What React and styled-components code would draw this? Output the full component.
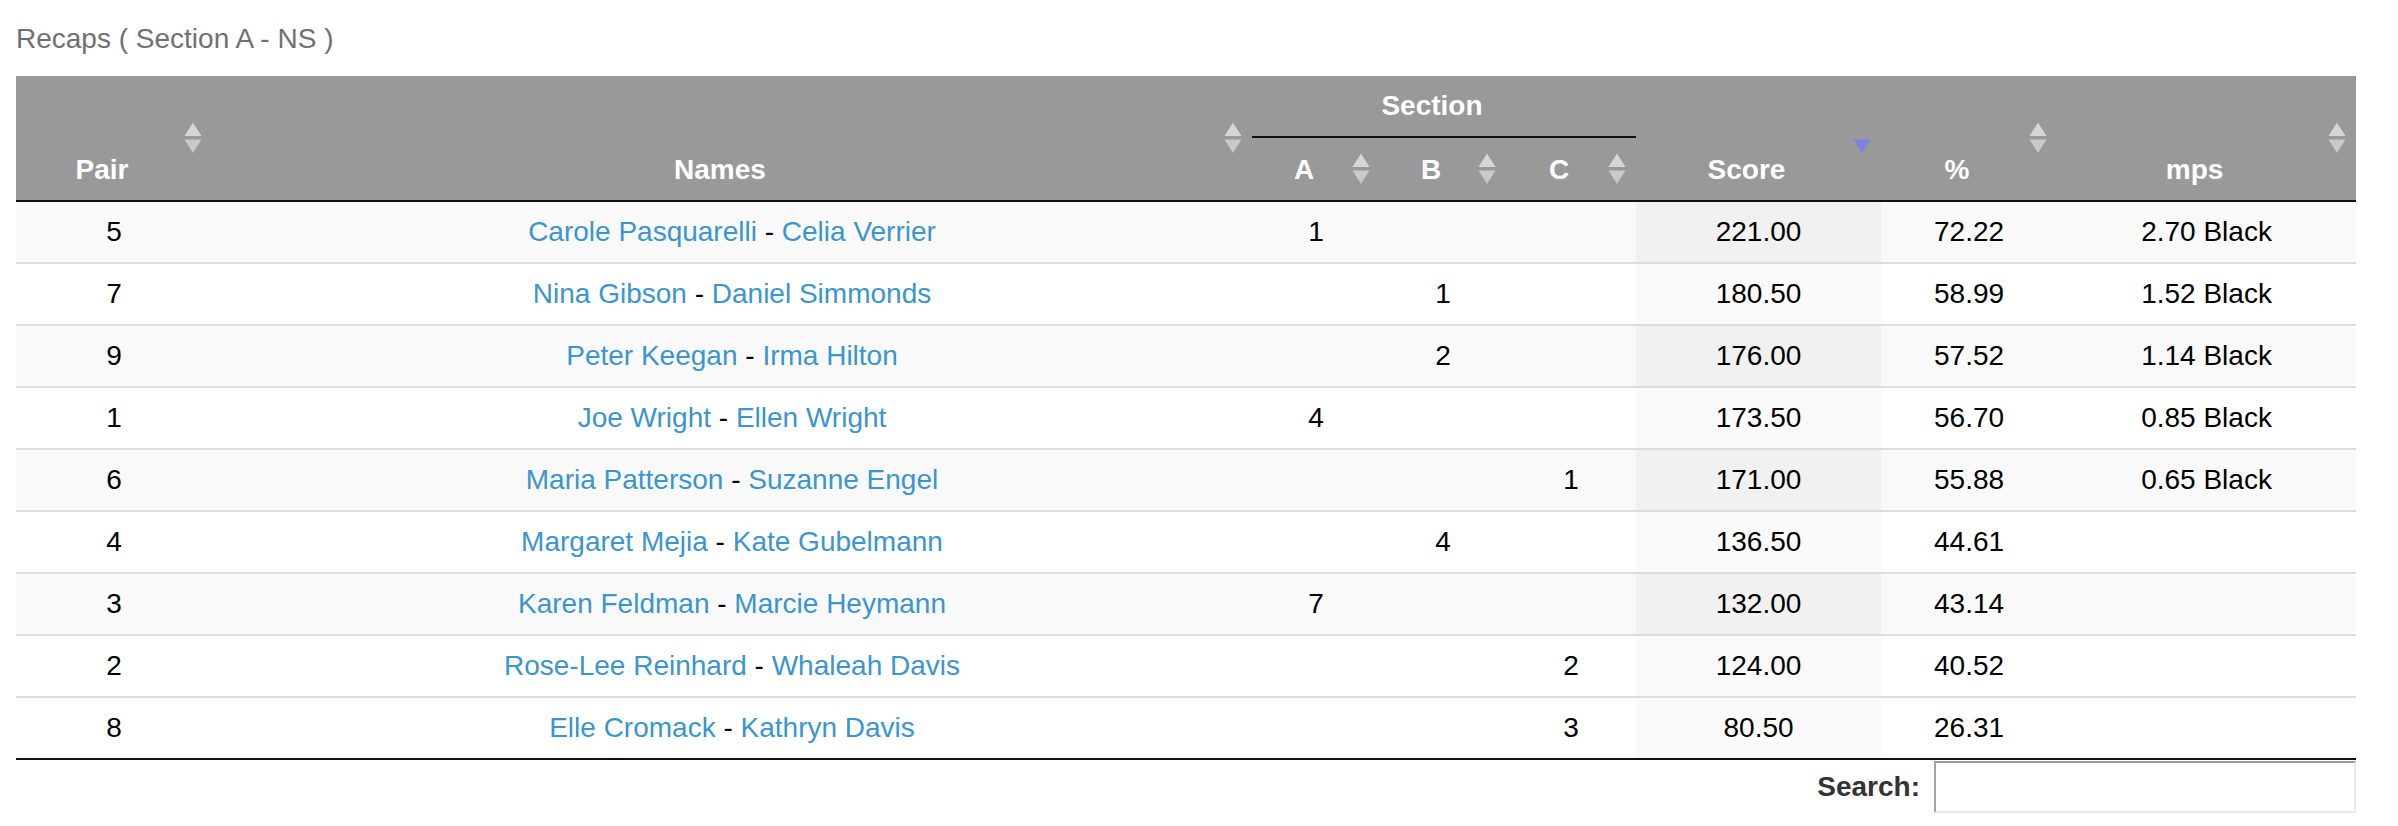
import React from "react";
import styled, { createGlobalStyle } from "styled-components";

const GlobalStyle = createGlobalStyle`
  body {
    margin: 0;
    background: #fff;
    font-family: "Liberation Sans", Arial, Helvetica, sans-serif;
  }
`;

const rows = [
  { pair: 5, a: "Carole Pasquarelli", b: "Celia Verrier", sec: ["1", "", ""], score: "221.00", pct: "72.22", mps: "2.70 Black" },
  { pair: 7, a: "Nina Gibson", b: "Daniel Simmonds", sec: ["", "1", ""], score: "180.50", pct: "58.99", mps: "1.52 Black" },
  { pair: 9, a: "Peter Keegan", b: "Irma Hilton", sec: ["", "2", ""], score: "176.00", pct: "57.52", mps: "1.14 Black" },
  { pair: 1, a: "Joe Wright", b: "Ellen Wright", sec: ["4", "", ""], score: "173.50", pct: "56.70", mps: "0.85 Black" },
  { pair: 6, a: "Maria Patterson", b: "Suzanne Engel", sec: ["", "", "1"], score: "171.00", pct: "55.88", mps: "0.65 Black" },
  { pair: 4, a: "Margaret Mejia", b: "Kate Gubelmann", sec: ["", "4", ""], score: "136.50", pct: "44.61", mps: "" },
  { pair: 3, a: "Karen Feldman", b: "Marcie Heymann", sec: ["7", "", ""], score: "132.00", pct: "43.14", mps: "" },
  { pair: 2, a: "Rose-Lee Reinhard", b: "Whaleah Davis", sec: ["", "", "2"], score: "124.00", pct: "40.52", mps: "" },
  { pair: 8, a: "Elle Cromack", b: "Kathryn Davis", sec: ["", "", "3"], score: "80.50", pct: "26.31", mps: "" },
];

// stripes as they show in the screenshot (last row is not striped)
const striped = [true, false, true, false, true, false, true, false, false];

const colWidths = [196, 1040, 128, 126, 130, 245, 176, 299];

const Page = styled.div`
  width: 2340px;
  padding-left: 16px;
`;

const Title = styled.div`
  font-size: 28px;
  line-height: 32px;
  color: #707070;
  margin: 23px 0 21px 0;
`;

const Table = styled.table`
  width: 2340px;
  table-layout: fixed;
  border-collapse: separate;
  border-spacing: 0;
  border-bottom: 2px solid #111;
`;

const HeadCell = styled.th`
  position: relative;
  background: #999;
  color: #fff;
  font-size: 28px;
  line-height: 32px;
  font-weight: bold;
  text-align: center;
  vertical-align: bottom;
  padding: ${(p) => (p.$second ? "16px" : "14px")} 60px 14px 36px;
  border-bottom: 2px solid #111;
  box-shadow: ${(p) => (p.$group ? "0 2px 0 #c4c4c4" : "none")};
  white-space: nowrap;
  overflow: hidden;
`;

const Cell = styled.td`
  font-size: 28px;
  line-height: 32px;
  color: #000;
  text-align: center;
  padding: 14px 20px;
  border-top: ${(p) => (p.$first ? "none" : "2px solid #ddd")};
  background: ${(p) =>
    p.$sorted ? (p.$odd ? "#f1f1f1" : "#fafafa") : p.$odd ? "#f9f9f9" : "#fff"};
  white-space: nowrap;
`;

const NameLink = styled.a`
  color: #3a95d0;
  text-decoration: none;
`;

const IconBox = styled.svg`
  position: absolute;
  right: 10px;
  top: 50%;
  transform: translateY(-50%);
  width: 18px;
  height: 31px;
`;

const SortIcon = ({ desc }) => (
  <IconBox viewBox="0 0 18 31">
    {!desc && <polygon points="9,0 17.5,13.5 0.5,13.5" fill="#d6d6d6" />}
    <polygon
      points="0.5,17 17.5,17 9,30.5"
      fill={desc ? "#7c82e2" : "#c9c9c9"}
    />
  </IconBox>
);

const Filter = styled.div`
  display: flex;
  justify-content: flex-end;
  align-items: center;
  margin-top: 1px;
`;

const FilterLabel = styled.label`
  font-size: 28px;
  font-weight: bold;
  color: #333;
`;

const SearchInput = styled.input`
  box-sizing: border-box;
  width: 422px;
  height: 52px;
  margin-left: 14px;
  border-top: 2px solid #9a9a9a;
  border-left: 2px solid #a4a4a4;
  border-right: 2px solid #e9e9e9;
  border-bottom: 2px solid #e9e9e9;
  background: #fff;
  font-size: 26px;
  outline: none;
`;

const Pairs = ({ a, b }) => (
  <>
    <NameLink href="#">{a}</NameLink> - <NameLink href="#">{b}</NameLink>
  </>
);

export default function App() {
  return (
    <Page>
      <GlobalStyle />
      <Title>Recaps ( Section A - NS )</Title>
      <Table>
        <colgroup>
          {colWidths.map((w, i) => (
            <col key={i} style={{ width: w }} />
          ))}
        </colgroup>
        <thead>
          <tr>
            <HeadCell rowSpan={2}>
              Pair
              <SortIcon />
            </HeadCell>
            <HeadCell rowSpan={2}>
              Names
              <SortIcon />
            </HeadCell>
            <HeadCell colSpan={3} $group>
              Section
            </HeadCell>
            <HeadCell rowSpan={2}>
              Score
              <SortIcon desc />
            </HeadCell>
            <HeadCell rowSpan={2}>
              %
              <SortIcon />
            </HeadCell>
            <HeadCell rowSpan={2}>
              mps
              <SortIcon />
            </HeadCell>
          </tr>
          <tr>
            {["A", "B", "C"].map((s) => (
              <HeadCell key={s} $second>
                {s}
                <SortIcon />
              </HeadCell>
            ))}
          </tr>
        </thead>
        <tbody>
          {rows.map((r, i) => {
            const odd = striped[i];
            const first = i === 0;
            return (
              <tr key={r.pair}>
                <Cell $odd={odd} $first={first}>{r.pair}</Cell>
                <Cell $odd={odd} $first={first}>
                  <Pairs a={r.a} b={r.b} />
                </Cell>
                {r.sec.map((v, j) => (
                  <Cell key={j} $odd={odd} $first={first}>{v}</Cell>
                ))}
                <Cell $odd={odd} $first={first} $sorted>{r.score}</Cell>
                <Cell $odd={odd} $first={first}>{r.pct}</Cell>
                <Cell $odd={odd} $first={first}>{r.mps}</Cell>
              </tr>
            );
          })}
        </tbody>
      </Table>
      <Filter>
        <FilterLabel>Search:</FilterLabel>
        <SearchInput type="search" />
      </Filter>
    </Page>
  );
}
